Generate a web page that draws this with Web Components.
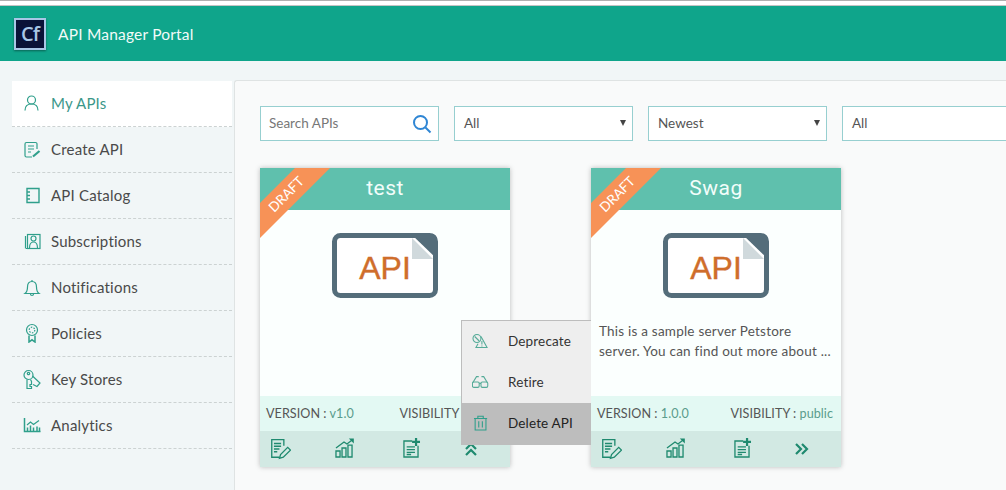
<!DOCTYPE html>
<html>
<head>
<meta charset="utf-8">
<title>API Manager Portal</title>
<style>
    html, body { margin: 0; height: 490px; overflow: hidden; }
    body { background: #f1f6f7; font-family: Lato, "Liberation Sans", sans-serif; color: #444; }
</style>
</head>
<body>
<portal-app>
    <portal-header slot="header">API Manager Portal</portal-header>
    <side-nav slot="nav">
        <nav-item icon="user" active>My APIs</nav-item>
        <nav-item icon="create">Create API</nav-item>
        <nav-item icon="catalog">API Catalog</nav-item>
        <nav-item icon="subs">Subscriptions</nav-item>
        <nav-item icon="bell">Notifications</nav-item>
        <nav-item icon="policy">Policies</nav-item>
        <nav-item icon="keys">Key Stores</nav-item>
        <nav-item icon="chart">Analytics</nav-item>
    </side-nav>
    <filter-bar slot="filters">
        <search-box>Search APIs</search-box>
        <filter-select>All</filter-select>
        <filter-select>Newest</filter-select>
        <filter-select wide>All</filter-select>
    </filter-bar>
    <api-card slot="cards" name="test" version="v1.0" visibility="public" open></api-card>
    <api-card slot="cards" name="Swag" version="1.0.0" visibility="public">This is a sample server Petstore server. You can find out more about ...</api-card>
</portal-app>

<script>
const ICONS = {
	user: `<circle cx="8.500" cy="7" r="4" /><path d="M2 17.500c0-4 2.500-6.500 6.500-6.500s6.500 2.500 6.500 6.500" />`,
	create: `<path d="M14 10V5a1.500 1.500 0 0 0-1.500-1.500h-9A1.500 1.500 0 0 0 2 5v11.500A1.500 1.500 0 0 0 3.500 18H9" /><path d="M5 7h6M5 10h6M5 13h3" /><path d="M10 17.500l6.500-5.500" stroke-width="2.200" />`,
	catalog: `<path d="M4 3.500h12v14H4zM4 7h3M4 10.500h3M4 14h3" stroke-width="1.400" />`,
	subs: `<rect x="4.500" y="3.500" width="12.500" height="14" /><path d="M2.500 5v12.500M3 17.500h2" /><circle cx="10.500" cy="7.500" r="2.500" /><path d="M6.500 17c0-3.500 1.500-6 4-6s4 2.500 4 6" />`,
	bell: `<path d="M2 16.500c2-1.500 2.500-3 2.500-6.500 0-3.200 1.800-5.500 4.500-5.500s4.500 2.300 4.500 5.500c0 3.500.5 5 2.500 6.500z" /><path d="M7.500 17a1.500 1.500 0 0 0 3 0M9 3v1.500" />`,
	policy: `<circle cx="9" cy="7" r="5.500" /><circle cx="9" cy="7" r="2.800" stroke-dasharray="1.500 1.400" /><path d="M6 12.500V19l3-2.200 3 2.200v-6.500" stroke-width="1.500" />`,
	keys: `<circle cx="5.500" cy="6" r="4.500" /><circle cx="5.500" cy="4.500" r="1.200" /><path d="M4 10.500V19.500h4.500v-2H7v-2h1.500v-3l-1-2" /><path d="M9.500 7l7.500 7-3 3.500-4-2" />`,
	chart: `<path d="M1.500 3v13.500h16" stroke-width="1.500" /><path d="M4.500 16.500v-4M7.500 16.500v-6M10.500 16.500v-4M14 16.500v-5M16.500 16.500v-4" stroke-width="1.500" /><path d="M4 10l3.500-3 3 2.500 5.500-4" />`,
	edit: `<path d="M13.500 7V1.500H2.500v16h7" /><path d="M4.500 5h6.500M4.500 7.500h6.500M4.500 10h5M4.500 12.500h3" /><path d="M9.500 18.500l1-3.500 6.500-6.500 2.500 2.500-6.500 6.500z" />`,
	graph: `<path d="M1.800 9.100l7.300-5.500 2.700 1.900 5-3.900" /><path d="M13.500.5h4.500v4.500z" fill="currentColor" stroke="none" /><path d="M1.800 11.800h3.700v5.500H1.800zM7.300 9.100h3.600v8.200H7.300zM12.700 6.400h3.700v10.900h-3.700z" />`,
	add: `<path d="M12 2.700H4.500v14.600h12.800V7" /><path d="M7 8h7.500M7 10.500h7.500M7 13h7.500M7 15h4" /><path d="M15.500 0v7.200M11.900 3.600h7.200" stroke-width="2" />`,
	warn: `<circle cx="5.500" cy="7.200" r="4.400" /><path d="M3 5l5 5" /><path d="M10 5l6.700 12.200H4.400l2.300-4.200" /><path d="M11 10v4M11 15v1" />`,
	glasses: `<path d="M1 10.500L5 4h2.500M17 10.500L13 4h-2.500" /><rect x=".5" y="10" width="7.500" height="6" rx="1.500" /><rect x="10" y="10" width="7.500" height="6" rx="1.500" /><path d="M8 11.500h2" />`,
	trash: `<path d="M2.200 5h14.600M6.500 5V2.500h6V5M3.500 5v12.800h12V5M7.500 8v7M11.500 8v7" />`
};

function icon(name, size) {
	return `<svg width="${size}" height="${size}" viewBox="0 0 20 20" fill="none" stroke="currentColor" stroke-width="1.200">${ICONS[name]}</svg>`;
}

class PortalApp extends HTMLElement {
	constructor() {
		super();
		this.attachShadow({ mode: "open" }).innerHTML = `
<style>
    :host { display: block; width: 1006px; height: 490px; overflow: hidden; }
    .top { height: 1px; background: #b0b0b0; }
    .gap { height: 4px; background: #fff; border-bottom: 1px solid #c4c4c4; }
    .body { display: flex; padding-top: 19px; align-items: flex-start; }
    main {
        flex: none;
        width: 772px;
        height: 440px;
        margin-left: 2px;
        box-sizing: border-box;
        background: #f9fafa;
        border: 1px solid #dfe3e3;
        border-right: 0;
        border-radius: 3px 0 0 0;
        padding: 25px 0 0 25px;
    }
    .cards { display: flex; gap: 81px; margin-top: 27px; }
</style>
<div class="top"></div>
<div class="gap"></div>
<slot name="header"></slot>
<div class="body">
    <slot name="nav"></slot>
    <main>
        <slot name="filters"></slot>
        <div class="cards"><slot name="cards"></slot></div>
    </main>
</div>`;
	}
}

class PortalHeader extends HTMLElement {
	constructor() {
		super();
		this.attachShadow({ mode: "open" }).innerHTML = `
<style>
    :host {
        display: flex;
        align-items: center;
        gap: 12px;
        height: 55px;
        padding-left: 14px;
        background: #0fa58b;
        color: #f2fbf9;
        font-size: 15.500px;
        letter-spacing: .2px;
    }
    .logo {
        width: 28px;
        height: 28px;
        border: 2px solid #a8c6e6;
        background: #0a1238;
        color: #a8c6e6;
        font: 600 20px/27px "Open Sans", sans-serif;
        text-align: center;
        letter-spacing: -1px;
        box-shadow: 0 1px 2px rgba(0,0,0,.4);
    }
</style>
<div class="logo">Cf</div>
<slot></slot>`;
	}
}

class SideNav extends HTMLElement {
	constructor() {
		super();
		this.attachShadow({ mode: "open" }).innerHTML = `
<style>
    :host { display: block; flex: none; width: 220px; margin: 1px 0 0 12px; }
</style>
<slot></slot>`;
	}
}

class NavItem extends HTMLElement {
	constructor() {
		super();
		this.attachShadow({ mode: "open" }).innerHTML = `
<style>
    :host {
        display: flex;
        align-items: center;
        height: 43px;
        padding: 0 0 2px 11px;
        gap: 8px;
        border-bottom: 1px dashed #ccd2d2;
        font-size: 15px;
        letter-spacing: .2px;
        color: #4a4a4a;
    }
    :host([active]) { background: #fff; color: #3b9789; }
    .ic { color: #2f9f8b; display: flex; }
</style>
<span class="ic">${icon(this.getAttribute("icon"), 20)}</span>
<slot></slot>`;
	}
}

class FilterBar extends HTMLElement {
	constructor() {
		super();
		this.attachShadow({ mode: "open" }).innerHTML = `
<style>
    :host { display: flex; gap: 15px; }
</style>
<slot></slot>`;
	}
}

const fieldStyle = `
    :host {
        display: flex;
        align-items: center;
        justify-content: space-between;
        flex: none;
        box-sizing: border-box;
        width: 179px;
        height: 35px;
        padding: 0 6px 2px 9px;
        background: #fff;
        border: 1px solid #97cfd0;
        font-size: 13.500px;
        color: #555;
    }
`;

class SearchBox extends HTMLElement {
	constructor() {
		super();
		this.attachShadow({ mode: "open" }).innerHTML = `
<style>${fieldStyle}
    :host { color: #777; padding-left: 8px; }
    svg { color: #2f86d4; position: relative; top: 1px; }
</style>
<slot></slot>
<svg width="20" height="20" viewBox="0 0 20 20" fill="none" stroke="currentColor" stroke-width="2"><circle cx="8.500" cy="8.500" r="6.500" /><path d="M13.500 13.500l5 5" /></svg>`;
	}
}

class FilterSelect extends HTMLElement {
	constructor() {
		super();
		this.attachShadow({ mode: "open" }).innerHTML = `
<style>${fieldStyle}
    :host { padding-right: 6px; }
    .arrow { width: 0; height: 0; border: 3.500px solid transparent; border-top: 6px solid #444; border-bottom: 0; }
    :host([wide]) .arrow { display: none; }
</style>
<slot></slot>
<span class="arrow"></span>`;
	}
}

class ApiCard extends HTMLElement {
	constructor() {
		super();
		const open = this.hasAttribute("open");
		this.attachShadow({ mode: "open" }).innerHTML = `
<style>
    :host {
        display: flex;
        flex-direction: column;
        position: relative;
        flex: none;
        width: 250px;
        height: 299px;
        background: #fbfffe;
        box-shadow: 0 0 5px rgba(0,0,0,.25);
        z-index: ${open ? 2 : 1};
    }
    .title {
        height: 42px;
        background: #5fc0ad;
        color: #f2fdfa;
        font: 400 21px/41px Roboto, sans-serif;
        letter-spacing: .5px;
        text-align: center;
    }
    .ribbon {
        position: absolute;
        left: 0;
        top: 0;
        width: 70px;
        height: 70px;
        background: #f79257;
        clip-path: polygon(35px 0, 70px 0, 0 70px, 0 35px);
    }
    .ribbon span {
        position: absolute;
        left: 0;
        top: 17px;
        width: 52px;
        text-align: center;
        color: #fff;
        font-size: 13.500px;
        line-height: 18px;
        transform: rotate(-45deg);
    }
    .body { flex: 1; padding: 23px 8px 0; }
    .doc { display: block; margin: 0 auto; }
    .desc { margin-top: 23px; font-size: 13.500px; line-height: 20px; color: #555; letter-spacing: .22px; }
    .meta {
        display: flex;
        justify-content: space-between;
        align-items: center;
        height: 35px;
        padding: 0 8px 0 6px;
        background: #e3f9f3;
        font-size: 12.600px;
        letter-spacing: .05px;
        color: #555;
    }
    .meta b { font-weight: 400; color: #5a9c8c; }
    .actions {
        display: flex;
        align-items: center;
        gap: 43px;
        height: 36px;
        padding-left: 9px;
        background: #d2e9e3;
        color: #1f8a6f;
    }
    .actions svg { flex: none; }
    .actions svg:last-child { margin-left: -4px; }
    .menu {
        position: absolute;
        left: 201px;
        top: 152px;
        width: 130px;
        background: #eee;
        border-top: 1px solid #bdbdbd;
        border-left: 1px solid #bdbdbd;
        box-sizing: border-box;
        font-size: 13.500px;
        letter-spacing: .15px;
        color: #333;
    }
    .menu div { display: flex; align-items: center; height: 39px; padding: 0 0 2px 10px; gap: 18px; }
    .menu svg { color: #55ab98; flex: none; }
    .menu .on { height: 40px; background: #bdbdbd; color: #222; }
    .menu .on svg { color: #2f9f8b; }
</style>
<div class="title">${this.getAttribute("name")}</div>
<div class="ribbon"><span>DRAFT</span></div>
<div class="body">
    <svg class="doc" width="106" height="65" viewBox="0 0 106 65">
        <rect x="2.500" y="2.500" width="101" height="60" rx="6" fill="#fff" stroke="#546d7a" stroke-width="5" />
        <path d="M79 1h21a5 5 0 0 1 5 5v20z" fill="#546d7a" />
        <path d="M80 5l21 21H80z" fill="#d0d9dc" />
        <text x="53" y="46" text-anchor="middle" font-family="Liberation Sans, sans-serif" font-size="32" fill="#cf6d2b" stroke="#cf6d2b" stroke-width=".4">API</text>
    </svg>
    <div class="desc"><slot></slot></div>
</div>
<div class="meta">
    <span>VERSION : <b>${this.getAttribute("version")}</b></span>
    <span>VISIBILITY : <b>${this.getAttribute("visibility")}</b></span>
</div>
<div class="actions">
    ${icon("edit", 22)}
    ${icon("graph", 22)}
    ${icon("add", 22)}
    ${open
		? `<svg width="22" height="22" viewBox="0 0 22 22" fill="none" stroke="currentColor" stroke-width="2.200"><path d="M6 11l5-5 5 5M6 17l5-5 5 5" /></svg>`
		: `<svg width="22" height="22" viewBox="0 0 22 22" fill="none" stroke="currentColor" stroke-width="2.200"><path d="M5 6l5 5-5 5M11 6l5 5-5 5" /></svg>`}
</div>
${open ? `
<div class="menu">
    <div>${icon("warn", 18)}Deprecate</div>
    <div>${icon("glasses", 18)}Retire</div>
    <div class="on">${icon("trash", 18)}Delete API</div>
</div>` : ""}`;
	}
}

customElements.define("portal-app", PortalApp);
customElements.define("portal-header", PortalHeader);
customElements.define("side-nav", SideNav);
customElements.define("nav-item", NavItem);
customElements.define("filter-bar", FilterBar);
customElements.define("search-box", SearchBox);
customElements.define("filter-select", FilterSelect);
customElements.define("api-card", ApiCard);
</script>
</body>
</html>
